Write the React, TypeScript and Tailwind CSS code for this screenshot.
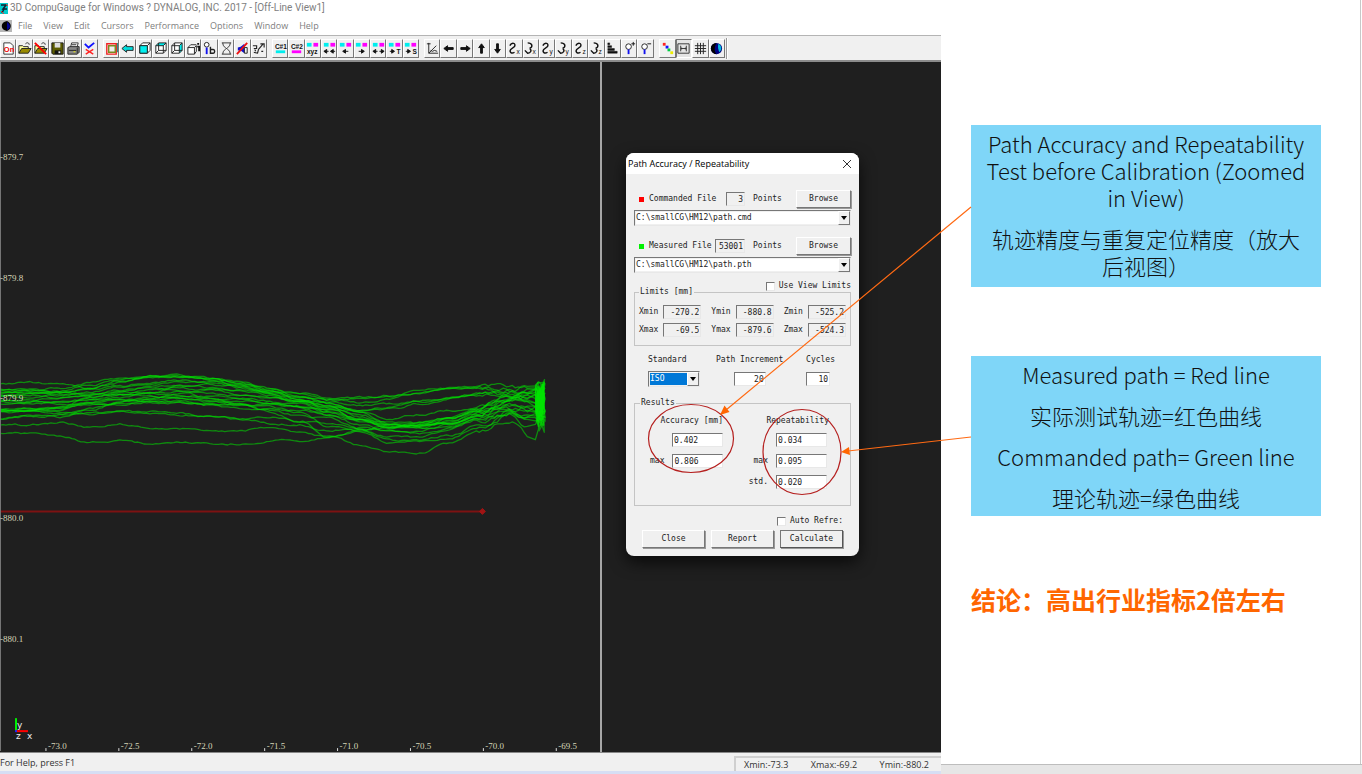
import React from "react";

const MENU = ["File", "View", "Edit", "Cursors", "Performance", "Options", "Window", "Help"];

const SERIES_X = [0, 30, 60, 90, 120, 150, 180, 210, 240, 270, 300, 330, 360, 390, 420, 450, 480, 510, 530];

// One row per measured cycle, heights sampled at SERIES_X
const CYCLES = [
  [385, 383, 385, 389, 383, 377, 377, 379, 383, 390, 397, 401, 399, 397, 393, 388, 387, 388, 389],
  [390, 391, 389, 383, 379, 376, 376, 379, 384, 388, 394, 399, 398, 396, 391, 389, 388, 391, 394],
  [391, 390, 391, 385, 380, 376, 378, 378, 382, 391, 395, 400, 403, 399, 394, 389, 387, 393, 388],
  [392, 394, 392, 389, 382, 377, 376, 380, 386, 392, 399, 403, 406, 405, 401, 398, 396, 392, 397],
  [393, 392, 393, 390, 387, 383, 381, 382, 386, 391, 397, 404, 410, 408, 402, 398, 395, 393, 392],
  [394, 393, 396, 393, 388, 385, 383, 384, 388, 394, 400, 406, 411, 410, 404, 399, 394, 396, 399],
  [395, 393, 394, 395, 391, 387, 386, 388, 391, 395, 402, 408, 413, 420, 415, 411, 410, 398, 394],
  [396, 397, 395, 394, 395, 390, 389, 390, 395, 397, 401, 409, 416, 423, 424, 419, 409, 398, 400],
  [397, 395, 398, 396, 393, 394, 392, 393, 396, 399, 403, 407, 417, 425, 423, 420, 411, 400, 396],
  [400, 401, 398, 397, 395, 393, 396, 397, 398, 402, 404, 412, 419, 427, 425, 423, 413, 403, 405],
  [401, 400, 403, 400, 396, 397, 398, 400, 400, 403, 406, 410, 420, 426, 427, 421, 414, 406, 410],
  [402, 404, 402, 399, 401, 400, 399, 402, 401, 405, 407, 413, 422, 428, 424, 424, 416, 401, 402],
  [404, 402, 404, 403, 400, 402, 401, 404, 405, 404, 408, 416, 421, 429, 428, 422, 412, 411, 412],
  [409, 409, 408, 403, 398, 393, 386, 385, 387, 393, 398, 404, 412, 424, 426, 419, 411, 400, 390],
  [410, 410, 409, 406, 403, 398, 394, 390, 390, 394, 402, 411, 420, 427, 429, 426, 418, 411, 407],
  [411, 409, 410, 404, 405, 401, 403, 406, 409, 409, 411, 415, 425, 432, 432, 425, 416, 408, 415],
  [411, 412, 414, 409, 404, 403, 404, 405, 405, 411, 416, 419, 429, 437, 438, 430, 420, 413, 418],
  [413, 412, 413, 414, 412, 412, 414, 417, 419, 418, 422, 424, 430, 441, 441, 436, 425, 412, 420],
  [420, 417, 418, 411, 403, 398, 399, 402, 405, 407, 413, 428, 432, 443, 442, 438, 428, 415, 424],
  [420, 417, 416, 413, 412, 413, 415, 417, 420, 424, 425, 431, 428, 432, 434, 428, 419, 414, 428],
  [426, 425, 423, 428, 425, 429, 429, 431, 431, 428, 434, 438, 431, 425, 426, 424, 417, 406, 411],
  [434, 434, 437, 443, 440, 444, 443, 445, 444, 442, 441, 437, 431, 428, 425, 418, 407, 397, 391],
  [411, 411, 408, 399, 392, 388, 391, 398, 405, 412, 422, 438, 446, 453, 453, 444, 432, 421, 437],
];

const X_TICKS = ["-73.0", "-72.5", "-72.0", "-71.5", "-71.0", "-70.5", "-70.0", "-69.5"];
const Y_TICKS = ["-879.7", "-879.8", "-879.9", "-880.0", "-880.1"];

const PLOT_TOP = 62;

function makeRandom(seed: number) {
  let s = seed;
  return () => {
    s = (s * 16807) % 2147483647;
    return s / 2147483647 - 0.5;
  };
}

function cyclePath(ys: number[], seed: number) {
  const rand = makeRandom(seed * 7919 + 11);
  const points: string[] = [];
  let drift = 0;
  for (let i = 0; i < SERIES_X.length - 1; i++) {
    const x0 = SERIES_X[i];
    const x1 = SERIES_X[i + 1];
    // the cycles get noisier towards the end of the path
    const noise = x0 >= 480 ? 4 : 1.6;
    for (let x = x0; x < x1; x += 3) {
      const t = (x - x0) / (x1 - x0);
      const smooth = t * t * (3 - 2 * t);
      drift = drift * 0.75 + rand() * noise;
      const y = ys[i] + (ys[i + 1] - ys[i]) * smooth + drift - PLOT_TOP;
      points.push(`${x} ${y.toFixed(1)}`);
    }
  }
  const last = ys[ys.length - 1] - PLOT_TOP;
  points.push(`536 ${(last + rand() * 8).toFixed(1)}`);
  for (let k = 0; k < 9; k++) {
    const y = 341 + (last - 341) * 0.5 + rand() * 34;
    points.push(`${(541 + rand() * 10).toFixed(1)} ${y.toFixed(1)}`);
  }
  return "M" + points.join(" L");
}

/* ---------- toolbar icons, 16 x 16 ---------- */

const page = (
  <>
    <path d="M3 2h7l3 3v9H3z" fill="#fff" stroke="#333" />
    <text x="3" y="12" fontSize="8" fontWeight="bold" fill="#e00">On</text>
  </>
);
const folder = (
  <>
    <path d="M2 13V5h4l1 1h5v2" fill="#ff9" stroke="#222" />
    <path d="M2 13l3-5h10l-3 5z" fill="#998a00" stroke="#222" />
    <path d="M9 3c2-2 4-1 4 1" fill="none" stroke="#222" />
  </>
);
const folderOff = (
  <>
    {folder}
    <path d="M2 2l12 12" stroke="#f00" strokeWidth="2" />
  </>
);
const floppy = (
  <>
    <path d="M2 2h12v12H3l-1-1z" fill="#5c5c00" stroke="#111" />
    <path d="M5 2h6v5H5z" fill="#ddd" />
    <path d="M5 10h7v4H5z" fill="#111" />
    <path d="M9 11h2v2H9z" fill="#eee" />
  </>
);
const printer = (
  <>
    <path d="M5 6l1-4h7l-1 4" fill="#fff" stroke="#333" />
    <path d="M2 7l2-1h10v6l-2 2H2z" fill="#888" stroke="#222" />
    <path d="M3 10h8M6 4h5M12 7v6" stroke="#222" />
    <path d="M8 11h2v1H8z" fill="#ee0" />
  </>
);
const checkCross = (
  <>
    <path d="M3 3l4 4 6-5" fill="none" stroke="#11f" strokeWidth="2" />
    <path d="M4 9l8 5M12 9l-8 5" stroke="#f22" strokeWidth="1.5" />
  </>
);
const frames = (
  <>
    <path d="M4 3h10v9" fill="none" stroke="#00807a" strokeWidth="1.5" />
    <path d="M3 3h10v11H3z" fill="#fff" stroke="#e22" strokeWidth="1.5" />
    <path d="M5 5h7v7H5z" fill="#eee" stroke="#7a8a20" strokeWidth="1.5" />
  </>
);
const cyanArrow = <path d="M2 8l5-4v2h7v4H7v2z" fill="#0dd" stroke="#222" />;

function cube(face: "front" | "top" | "side") {
  return (
    <>
      <path d="M3 5l3-3h8v8l-3 3H3z" fill="#fff" />
      {face === "top" && <path d="M3 5l3-3h8l-3 3z" fill="#0ee" />}
      {face === "side" && <path d="M11 5l3-3v8l-3 3z" fill="#0ee" />}
      <path d="M3 5h8v8H3zM3 5l3-3h8v8l-3 3M11 5l3-3" fill="none" stroke="#222" />
      {face === "front" ? (
        <path d="M3 5h8v8H3z" fill="#0ee" stroke="#222" />
      ) : (
        <path d="M6 2v8h8M6 10l-3 3" fill="none" stroke="#222" />
      )}
    </>
  );
}

const cubeInfo = (
  <>
    <path d="M2 7h7v7H2zM2 7l3-3h6M9 7l2-2v6l-2 3" fill="#fff" stroke="#222" />
    <path d="M13 2v2M12 6h2v5" fill="none" stroke="#111" strokeWidth="2" />
  </>
);
const probe = (
  <>
    <circle cx="5" cy="4" r="2.5" fill="#fff" stroke="#222" />
    <path d="M5 7v7" stroke="#11e" strokeWidth="2" />
    <path d="M9 6v7h3c2 0 2-4 0-4H9" fill="none" stroke="#222" strokeWidth="1.5" />
  </>
);
const hourglass = (
  <path d="M3 2h10M3 14h10M4 2c0 4 3 5 4 6-1 1-4 2-4 6M12 2c0 4-3 5-4 6 1 1 4 2 4 6" fill="none" stroke="#333" />
);
const bell = (
  <>
    <path d="M6 6l4-3v10l-4-3H3V7z" fill="#11c" />
    <path d="M2 14L13 2" stroke="#e11" strokeWidth="2" />
    <path d="M10 7h3v6h-3z" fill="none" stroke="#222" />
  </>
);
const scatter = (
  <path d="M2 5h4v3H3M3 12l4 1 1-4M8 9l5-6M10 3h4v4M11 11h2M4 9l1 2" fill="none" stroke="#222" strokeWidth="1.2" />
);

function cursor(label: string, color: string) {
  return (
    <>
      <text x="2" y="8" fontSize="7" fontWeight="bold" fill="#111">{label}</text>
      <path d="M3 10h10v3H3z" fill={color} />
    </>
  );
}

function pair(glyph: React.ReactNode) {
  return (
    <>
      <path d="M2 2h5v4H2z" fill="#0ee" />
      <path d="M9 2h5v4H9z" fill="#f0f" />
      {glyph}
    </>
  );
}

const goLeft = "M2 11l3-2v4zM4 11h3";
const goRight = "M14 11l-3-2v4zM12 11H9";
const line = (d: string) => <path d={d} fill="#111" stroke="#111" />;
const letters = (s: string, x: number) => <text x={x} y="14" fontSize="7" fontWeight="bold" fill="#111">{s}</text>;

const graph = <path d="M4 2v11h10M4 13l8-8M6 10l2 1 2-1 3 1M2 3h4" fill="none" stroke="#222" />;

function turn(label: string, flip: boolean) {
  return (
    <>
      <path
        d={flip ? "M5 2c5 0 6 4 2 6M7 8c3 2 1 5-2 5L2 10" : "M3 5c2-4 7-3 5 1L4 9c-2 3 1 5 4 3"}
        fill="none"
        stroke="#111"
        strokeWidth="1.5"
      />
      <text x="10" y="14" fontSize="7" fill="#111">{label}</text>
    </>
  );
}

const bars = <path d="M3 2h2v2H3zM3 5h4v2H3zM3 8h7v2H3zM3 11h10v2H3z" fill="#111" stroke="#111" strokeWidth=".5" />;

function lens(sign: string) {
  return (
    <>
      <circle cx="7" cy="6" r="3" fill="#fff" stroke="#222" />
      <path d="M7 9v5" stroke="#11e" strokeWidth="2" />
      <path d={sign} stroke="#111" />
    </>
  );
}

const dots = (
  <>
    <path d="M3 2h3v3H3z" fill="#f22" />
    <path d="M6 5h3v3H6z" fill="#11f" />
    <path d="M8 8h3v3H8z" fill="#0c4" />
    <path d="M11 11h3v3h-3z" fill="#ee0" />
  </>
);
const fit = <path d="M2 3h12v10H2zM5 5v6M11 5v6M5 8h6M6 7v2M10 7v2" fill="none" stroke="#333" />;
const grid = <path d="M5 2v12M8 2v12M11 2v12M2 5h12M2 8h12M2 11h12" fill="none" stroke="#222" />;
const globe = (
  <>
    <circle cx="8" cy="8" r="6" fill="#000080" />
    <path d="M8 2a6 6 0 0 0 0 12c-3-4-2-8 0-12z" fill="#000" />
    <path d="M10 3c4 2 4 7 1 9-1-3-2-5-1-9z" fill="#0bd" />
  </>
);

const TOOL_GROUPS: { name: string; width: string; icons: React.ReactNode[] }[] = [
  { name: "File", width: "w-[98px]", icons: [page, folder, folderOff, floppy, printer, checkCross] },
  {
    name: "Views",
    width: "w-[164px]",
    icons: [frames, cyanArrow, cube("front"), cube("top"), cube("side"), cubeInfo, probe, hourglass, bell, scatter],
  },
  {
    name: "Cursors",
    width: "w-[147px]",
    icons: [
      cursor("C#1", "#0ee"),
      cursor("C#2", "#f0f"),
      pair(letters("xyz", 2)),
      pair(line("M2 11l3-2v4zM5 11h2M9 11l3-2v4zM12 11h2")),
      pair(line("M5 11l3-2v4zM8 11h3")),
      pair(line("M11 11l-3-2v4zM8 11H5")),
      pair(line(goLeft + goRight)),
      pair(<>{line("M8 11l-3-2v4zM6 11H3")}{letters("T", 10)}</>),
      pair(<>{line("M8 11l-3-2v4zM6 11H3")}{letters("S", 10)}</>),
    ],
  },
  {
    name: "Move",
    width: "w-[230px]",
    icons: [
      graph,
      line("M3 8l4-3v6zM6 7h7v2H6z"),
      line("M13 8L9 5v6zM10 7H3v2h7z"),
      line("M8 3L5 7h6zM7 6v7h2V6z"),
      line("M8 13L5 9h6zM7 10V3h2v7z"),
      turn("x", false),
      turn("x", true),
      turn("y", false),
      turn("y", true),
      turn("z", false),
      turn("z", true),
      bars,
      lens("M10 3h4M12 1v4"),
      lens("M10 3h4"),
    ],
  },
  { name: "Display", width: "w-[66px]", icons: [dots, fit, grid, globe] },
];

function ToolBar() {
  return (
    <div className="flex h-[25px] items-center gap-[5px] border-t border-[#b4b4b4] bg-[#f0f0f0]" role="toolbar">
      {TOOL_GROUPS.map((group) => (
        <div key={group.name} className={`flex shrink-0 ${group.width}`}>
          {group.icons.map((icon, i) => {
            const pressed = group.name === "Display" && i === 1;
            return (
              <button
                key={i}
                type="button"
                aria-label={`${group.name} ${i + 1}`}
                className={`flex h-[19px] min-w-0 flex-1 items-center justify-center border ${
                  pressed
                    ? "border-t-[#777] border-l-[#777] border-r-white border-b-white bg-[#e4e4e4]"
                    : "border-t-white border-l-white border-r-[#777] border-b-[#777] bg-[#f0f0f0]"
                }`}
              >
                <svg viewBox="0 0 16 16" className="h-[15px] w-[15px] shrink-0 font-['Liberation_Sans',sans-serif]">
                  {icon}
                </svg>
              </button>
            );
          })}
        </div>
      ))}
      <div className="-ml-1 h-[21px] w-[2px] border-l border-[#999] bg-white" />
    </div>
  );
}

function Plot() {
  return (
    <svg viewBox="0 0 601 690" preserveAspectRatio="xMinYMin meet" className="block w-full font-['Liberation_Serif',serif]">
      <g fill="none" stroke="#00e400" strokeOpacity=".55" strokeWidth="1.3" strokeLinejoin="round">
        {CYCLES.map((ys, i) => (
          <path key={i} d={cyclePath(ys, i + 1)} />
        ))}
      </g>
      <path d="M0 450H483" stroke="#7d1212" strokeWidth="2" />
      <path d="M483 447l3 3-3 3-3-3z" fill="#a01414" stroke="#a01414" />
      <path d="M.5 0v690" stroke="#777" />

      <g fill="#d6d6b8">
        {Y_TICKS.map((label, i) => (
          <text key={label} x="0" y={98 + Math.round(i * 120.7)} fontSize="9">{label}</text>
        ))}
        {X_TICKS.map((label, i) => (
          <g key={label}>
            <path d={`M${46 + i * 73} 687v3`} stroke="#ddd" />
            <text x={48 + i * 73} y="688" fontSize="9">{label}</text>
          </g>
        ))}
      </g>

      <path d="M16 657v13" stroke="#0e0" strokeWidth="2" />
      <path d="M16 670h12" stroke="#f00" strokeWidth="2" />
      <path d="M15 669h2v2h-2z" fill="#22f" />
      <g fill="#eee" fontSize="9" className="font-['DejaVu_Sans',sans-serif]">
        <text x="17" y="667">y</text>
        <text x="16" y="678">z</text>
        <text x="27" y="678">x</text>
      </g>
    </svg>
  );
}

/* ---------- dialog ---------- */

const SUNKEN = "border border-t-[#777] border-l-[#777] border-r-[#e8e8e8] border-b-[#e8e8e8]";
const RAISED = "border border-t-white border-l-white border-r-[#777] border-b-[#777] shadow-[1px_1px_0_#999]";

function Field({ label, value, className }: { label: string; value: string; className: string }) {
  return <input aria-label={label} defaultValue={value} className={`h-[14px] min-w-0 px-px ${SUNKEN} ${className}`} />;
}

function Combo({ label, value, className }: { label: string; value: string; className: string }) {
  return (
    <div className={`relative h-4 p-px ${SUNKEN}`}>
      <select aria-label={label} className={`block h-full w-full appearance-none ${className}`}>
        <option>{value}</option>
      </select>
      <span className="pointer-events-none absolute top-0 right-0 flex h-full w-3 items-center justify-center border border-t-white border-l-white border-r-[#777] border-b-[#777] bg-[#f0f0f0]">
        <svg viewBox="0 0 6 4" className="h-1 w-[6px]"><path d="M0 0h6L3 4z" /></svg>
      </span>
    </div>
  );
}

function FileRow({ label, color, points, width, path }: { label: string; color: string; points: string; width: string; path: string }) {
  return (
    <div>
      <div className="flex h-5 items-center">
        <span className={`mr-[5px] ml-[5px] h-[5px] w-[5px] ${color}`} />
        <span>{label}</span>
        <span className="mr-2 flex flex-1 justify-end">
          <Field label={`${label} points`} value={points} className={`text-right ${width}`} />
        </span>
        <span className="w-[43px]">Points</span>
        <button type="button" className={`h-[18px] w-[55px] ${RAISED}`}>Browse</button>
      </div>
      <div className="mt-px">
        <Combo label={label} value={path} className="bg-white" />
      </div>
    </div>
  );
}

const LIMITS = [
  ["Xmin", "-270.2"],
  ["Ymin", "-880.8"],
  ["Zmin", "-525.2"],
  ["Xmax", "-69.5"],
  ["Ymax", "-879.6"],
  ["Zmax", "-524.3"],
];

function Result({ label, value }: { label: string; value: string }) {
  return (
    <div className="flex items-center justify-end gap-2">
      <span>{label}</span>
      <Field label={`Result ${label}`} value={value} className="w-[51px] bg-white" />
    </div>
  );
}

function PathDialog() {
  return (
    <section
      role="dialog"
      aria-label="Path Accuracy / Repeatability"
      className="absolute top-[153px] left-[626px] w-[233px] overflow-hidden rounded-lg bg-[#f0f0f0] pb-2 font-['DejaVu_Sans_Mono',monospace] text-[8px] leading-[10px] text-[#222] shadow-[0_6px_16px_rgba(0,0,0,0.7)]"
    >
      <header className="flex h-[21px] items-center justify-between bg-white pr-2 pl-[2px] font-['Open_Sans',sans-serif] text-[9px] text-black">
        <h2>Path Accuracy / Repeatability</h2>
        <button type="button" aria-label="Close dialog">
          <svg viewBox="0 0 8 8" className="h-2 w-2"><path d="M0 0l8 8M8 0L0 8" stroke="#333" /></svg>
        </button>
      </header>

      <div className="flex flex-col px-2 pt-[15px]">
        <FileRow label="Commanded File" color="bg-[#f00]" points="3" width="w-[19px]" path="C:\smallCG\HM12\path.cmd" />
        <div className="mt-[10px]">
          <FileRow label="Measured File" color="bg-[#00f000]" points="53001" width="w-[30px]" path="C:\smallCG\HM12\path.pth" />
        </div>

        <label className="mt-2 flex items-center justify-end gap-1">
          <input type="checkbox" className={`h-[9px] w-[9px] appearance-none bg-white ${SUNKEN}`} />
          Use View Limits
        </label>

        <fieldset className="-mt-1 h-[59px] border border-[#c4c4c4] px-1">
          <legend className="px-px">Limits [mm]</legend>
          <div className="mt-2 grid grid-cols-3 gap-x-[10px] gap-y-1">
            {LIMITS.map(([label, value]) => (
              <div key={label} className="flex items-center justify-between">
                <span>{label}</span>
                <Field label={label} value={value} className="w-[38px] text-right" />
              </div>
            ))}
          </div>
        </fieldset>

        <div className="mt-[9px] flex gap-4 pr-4 pl-[14px]">
          <div className="w-[52px]">
            <div className="mb-[6px]">Standard</div>
            <Combo label="Standard" value="ISO" className="bg-[#0078d7] text-white" />
          </div>
          <div className="flex flex-col items-center gap-[7px]">
            <label htmlFor="increment">Path Increment</label>
            <input id="increment" defaultValue="20" className={`h-[14px] w-8 bg-white px-px text-right ${SUNKEN}`} />
          </div>
          <div className="ml-auto flex flex-col gap-[7px]">
            <label htmlFor="cycles">Cycles</label>
            <input id="cycles" defaultValue="10" className={`h-[14px] w-6 bg-white px-px text-right ${SUNKEN}`} />
          </div>
        </div>

        <fieldset className="mt-[11px] h-[108px] border border-[#c4c4c4] pr-[23px] pl-[15px]">
          <legend className="-ml-[10px] px-px">Results</legend>
          <div className="mt-2 flex justify-between">
            <div className="flex w-[73px] flex-col gap-[7px]">
              <div className="text-right">Accuracy [mm]</div>
              <Result label="" value="0.402" />
              <Result label="max" value="0.806" />
            </div>
            <div className="flex w-[80px] flex-col gap-[7px]">
              <div className="-mr-[2px] text-right">Repeatability</div>
              <Result label="" value="0.034" />
              <Result label="max" value="0.095" />
              <Result label="std." value="0.020" />
            </div>
          </div>
        </fieldset>

        <label className="mt-[10px] flex items-center justify-end gap-1 pr-2">
          <input type="checkbox" className={`h-[9px] w-[9px] appearance-none bg-white ${SUNKEN}`} />
          Auto Refre:
        </label>
        <div className="mt-1 flex justify-end gap-[6px] pr-2">
          <button type="button" className={`h-[18px] w-[63px] ${RAISED}`}>Close</button>
          <button type="button" className={`h-[18px] w-[63px] ${RAISED}`}>Report</button>
          <button type="button" className="h-[18px] w-[63px] border border-t-[#777] border-l-[#777] border-r-[#555] border-b-[#555] shadow-[1px_1px_0_#999]">
            Calculate
          </button>
        </div>
      </div>
    </section>
  );
}

/* Ellipses round the results and the arrows that lead to the notes */
function Markup() {
  return (
    <svg className="pointer-events-none absolute top-0 left-0 h-[774px] w-[1362px]" viewBox="0 0 1362 774">
      <g fill="none" stroke="#b5201f" strokeWidth="1.2">
        <ellipse cx="691" cy="438.5" rx="42.5" ry="34" />
        <ellipse cx="802" cy="452" rx="39" ry="42.5" />
      </g>
      <g stroke="#ff6a13" strokeWidth="1.2">
        <path d="M971 207L726 410M971 437L848 451" />
      </g>
      <path d="M720 415l4.500-9.500 5 6.500z" fill="#ff6600" />
      <path d="M841 452l8-5 1 8z" fill="#ff6600" />
    </svg>
  );
}

export default function App() {
  return (
    <div className="relative flex min-h-screen bg-[#e6e6e6] font-['Open_Sans',sans-serif]">
      <main className="flex min-w-0 flex-1 flex-col bg-[#f0f0f0] text-[9px] leading-3">
        <header className="bg-white text-[#808080]">
          <div className="flex h-4 items-center gap-px">
            <svg viewBox="0 0 9 13" className="h-[13px] w-[9px]">
              <path d="M0 1h8v11H0z" fill="#0cc" />
              <path d="M1 3h5l-3 4h4M4 7l-2 4" fill="none" stroke="#123" strokeWidth="1.5" />
              <path d="M1 9l3 3M6 2l2 2" stroke="#e33" />
            </svg>
            <h1 className="font-['Roboto',sans-serif] text-[10px]">
              3D CompuGauge for Windows ? DYNALOG, INC. 2017 - [Off-Line View1]
            </h1>
          </div>
          <nav className="flex h-[19px] items-center">
            <svg viewBox="0 0 12 12" className="mr-[6px] h-3 w-3">
              <path d="M0 0h12v12H0z" fill="#b8b8b8" />
              <path d="M7 1c5 2 5 8 0 10-7-1-7-9 0-10z" fill="#000" />
              <path d="M7 2c4 3 4 6 0 8z" fill="#000090" />
            </svg>
            <ul className="flex gap-[11px]">
              {MENU.map((item) => (
                <li key={item}>
                  <a href={`#${item.toLowerCase()}`}>{item}</a>
                </li>
              ))}
            </ul>
          </nav>
        </header>

        <ToolBar />

        <div className="flex flex-1 border-t-2 border-[#8c8c8c] bg-[#1f1f1f]">
          <div className="w-[64%] border-r-2 border-[#a6a6a6]">
            <Plot />
          </div>
        </div>

        <footer className="flex h-[22px] justify-between border-t border-b-[3px] border-t-[#888] border-b-[#d6def4] text-[#333]">
          <span className="self-end pb-[2px]">For Help, press F1</span>
          <div className="mt-[3px] flex w-[207px] items-center justify-between border-t-2 border-l-2 border-[#cfcfcf] pr-3 pl-2">
            <span>Xmin:-73.3</span>
            <span>Xmax:-69.2</span>
            <span>Ymin:-880.2</span>
          </div>
        </footer>
      </main>

      <aside className="mb-[9px] w-[421px] shrink-0 border-b border-[#bdbdbd] bg-white">
        <div className="mr-px flex h-full flex-col border-r border-[#c8c8c8] pt-[125px] pr-[39px] pl-[30px] font-['Noto_Sans_CJK_SC',sans-serif] text-[22px] leading-[27px] text-[#111]">
          <div className="flex flex-col gap-[14px] bg-[#7fd6f8] px-3 pt-[5px] pb-2 text-center font-light">
            <p>Path Accuracy and Repeatability Test before Calibration (Zoomed in View)</p>
            <p>轨迹精度与重复定位精度（放大后视图）</p>
          </div>
          <div className="mt-[69px] flex flex-col gap-[14px] bg-[#7fd6f8] px-3 py-[5px] text-center font-light">
            <p>Measured path = Red line</p>
            <p>实际测试轨迹=红色曲线</p>
            <p>Commanded path= Green line</p>
            <p>理论轨迹=绿色曲线</p>
          </div>
          <p className="mt-[70px] text-[25px] font-bold text-[#ff6600]">结论：高出行业指标2倍左右</p>
        </div>
      </aside>

      <PathDialog />
      <Markup />
    </div>
  );
}
